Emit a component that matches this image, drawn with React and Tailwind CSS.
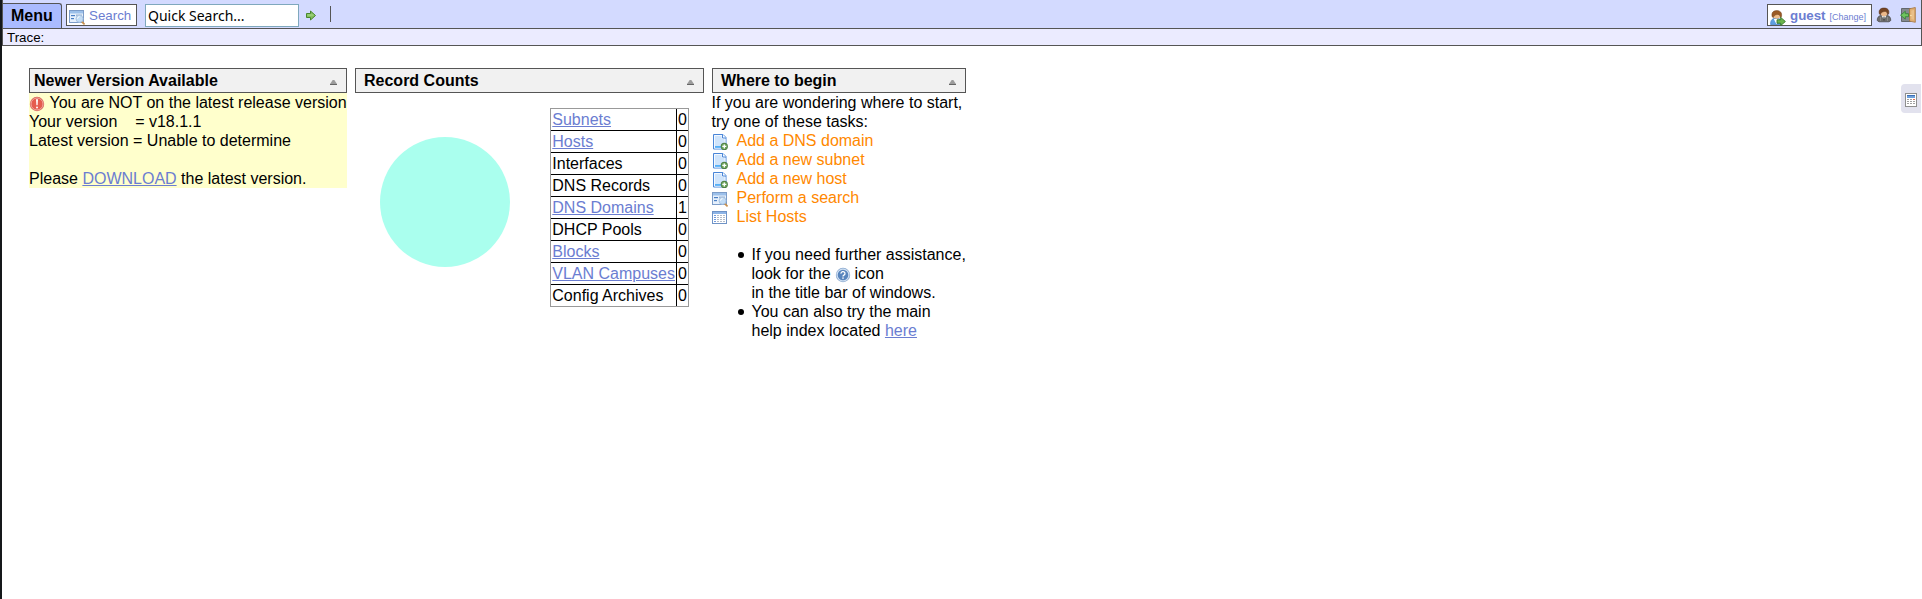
import React from "react";

const link = "text-[#6b7dd1] underline cursor-pointer";

function SearchIcon({ className = "" }) {
  return (
    <svg width="16" height="16" viewBox="0 0 16 16" className={className}>
      <rect x="0.5" y="1.5" width="14" height="12" fill="#e6f0fc" stroke="#7c9cc8" />
      <rect x="1" y="2" width="13" height="2.5" fill="#9cc0ea" />
      <rect x="2" y="6" width="4" height="1.2" fill="#4a7fc4" />
      <rect x="2" y="9" width="3" height="1.2" fill="#4a7fc4" />
      <rect x="7" y="5.5" width="6" height="1.5" fill="#9fb6d4" />
      <path d="M12.8 12.6 15 14.8" stroke="#c98f4c" strokeWidth="1.8" strokeLinecap="round" />
      <circle cx="10.5" cy="9.8" r="3.5" fill="#c3ddf6" stroke="#a9c4e2" />
      <path d="M8.5 9.600a2.100 2.100 0 0 1 2-2" stroke="#fff" fill="none" />
    </svg>
  );
}

function PageAddIcon() {
  return (
    <svg width="16" height="16" viewBox="0 0 16 16">
      <path d="M1.5.5h9.5l3 3v11.500h-12.500z" fill="#cfe4fb" stroke="#4a86d8" />
      <path d="M2.500 1.500h7.500v3h3v9.500h-10.500z" fill="none" stroke="#f4f9ff" />
      <path d="M10.500.5v3.500h3.500" fill="#fff" stroke="#4a86d8" />
      <rect x="3" y="12.200" width="6" height="1.500" fill="#39a3f5" />
      <circle cx="12.300" cy="12.400" r="3.600" fill="#4f7f45" />
      <circle cx="12.300" cy="12.400" r="2.700" fill="#6da45c" />
      <path d="M12.300 10.400v4M10.300 12.400h4" stroke="#fff" strokeWidth="1.300" />
    </svg>
  );
}

function ListIcon() {
  return (
    <svg width="16" height="16" viewBox="0 0 16 16" shapeRendering="crispEdges">
      <rect x="0.5" y="1.5" width="14" height="12" fill="#fff" stroke="#6f93c6" />
      <rect x="1" y="2" width="13" height="2" fill="#8db4e6" />
      <path d="M2 5.5h2M2 7.5h2M2 9.5h2M2 11.5h2" stroke="#6f9ade" />
      <path d="M5 5.5h2M8 5.5h2M11 5.5h2M5 7.5h2M8 7.5h2M11 7.5h2M5 9.5h2M8 9.5h2M11 9.5h2M5 11.5h2M8 11.5h2M11 11.5h2" stroke="#b4bcc8" />
    </svg>
  );
}

function ArrowIcon() {
  return (
    <svg width="12" height="11" viewBox="0 0 12 11">
      <path d="M1.5 3.5h4V1l5 4.5-5 4.5V7.5h-4z" fill="#84c05e" stroke="#47862f" strokeLinejoin="round" />
      <path d="M2.5 5h6" stroke="#a8d98a" />
    </svg>
  );
}

function AlertIcon() {
  return (
    <svg width="16" height="16" viewBox="0 0 16 16">
      <circle cx="8" cy="8" r="7.2" fill="#d9665c" />
      <circle cx="8" cy="8" r="6" fill="#e55c4e" stroke="#f3a79d" strokeWidth="1" />
      <path d="M7 3.2h2l-.4 6H7.4z" fill="#fff" />
      <rect x="7" y="10.4" width="2" height="2" rx="1" fill="#fff" />
    </svg>
  );
}

function HelpIcon() {
  return (
    <svg width="16" height="16" viewBox="0 0 16 16">
      <circle cx="8" cy="8" r="7.2" fill="#8ba9cf" />
      <circle cx="8" cy="8" r="5.9" fill="#5885bd" stroke="#cfe0f3" strokeWidth="1.2" />
      <path d="M6 6.600a2 1.900 0 1 1 3 1.500c-.7.4-1 .7-1 1.300" fill="none" stroke="#fff" strokeWidth="1.3" />
      <rect x="7.3" y="10.4" width="1.4" height="1.4" fill="#fff" />
    </svg>
  );
}

function UserGoIcon() {
  return (
    <svg width="16" height="16" viewBox="0 0 16 16">
      <path d="M.6 14.5C.5 10.5 2 8.500 5 8.500h3c2.500 0 3.600 2 3.600 6z" fill="#5e9fe0" stroke="#3f7fc6" strokeWidth=".7" />
      <path d="M3.800 9l2.700 5.300L9 9z" fill="#fff" />
      <circle cx="6.800" cy="5.600" r="3.200" fill="#f0bd8a" />
      <path d="M2.200 6.800C1 2.500 3.500.6 6.800.6s5.600 1.900 4.600 6.200L10.300 8C10.300 6 9.500 4.800 8 4.300c-2 .6-4 .3-4.600 3.500z" fill="#9b5a25" stroke="#6e3b14" strokeWidth=".5" />
      <path d="M7 9.800h3.700V7.400l4.700 4.100-4.700 4.100v-2.400H7z" fill="#6bb54d" stroke="#37782a" strokeWidth=".9" />
    </svg>
  );
}

function UserSuitIcon() {
  return (
    <svg width="16" height="16" viewBox="0 0 16 16">
      <path d="M1.200 13.500C1.200 10 3 8.500 5.500 8.500h5c2.500 0 4.300 1.500 4.300 5l-1.800 1.300H3z" fill="#6e6e6e" stroke="#444" strokeWidth=".7" />
      <path d="M4.500 10v4M11.500 10v4" stroke="#929292" strokeWidth=".8" />
      <path d="M5.800 8.700 8 13l2.200-4.300z" fill="#fff" />
      <path d="M7.500 9.500h1L8.700 13l-.7.8-.7-.8z" fill="#333" />
      <circle cx="8" cy="6" r="3.200" fill="#edb98a" />
      <path d="M3.400 7C2.200 2.800 4.700 1 8 1s5.800 1.800 4.600 6L11.500 8C11.500 5.500 10.500 4.500 9 4.300 7.500 4.900 4.800 4.500 4.500 8z" fill="#754424" stroke="#4e2a13" strokeWidth=".5" />
    </svg>
  );
}

function DoorIcon() {
  return (
    <svg width="16" height="16" viewBox="0 0 16 16">
      <path d="M1.500 1.500h9v13h-9z" fill="#848a8e" stroke="#63686c" />
      <path d="M9.500 1.800 15.300.5v14.800l-5.800-1.200z" fill="#dfae70" stroke="#a3743e" strokeWidth=".8" />
      <path d="M11.300 3.500 14 3v9.800l-2.700-.5z" fill="#eac08a" />
      <circle cx="10.900" cy="8.500" r=".7" fill="#fff2bd" />
      <path d="M8.500 6.700H5.300V4.300L.5 8.200l4.800 3.900V9.700h3.200z" fill="#6fc45f" stroke="#348136" strokeWidth=".8" />
    </svg>
  );
}

function CalculatorIcon() {
  return (
    <svg width="12" height="14" viewBox="0 0 12 14" shapeRendering="crispEdges">
      <rect x=".5" y=".5" width="11" height="13" fill="#fff" stroke="#8e8e8e" />
      <rect x="2" y="2" width="8" height="3" fill="#6d9fdc" />
      <rect x="2" y="2" width="8" height="1" fill="#3d6fb5" />
      <path d="M2 6.500h2M5 6.500h2M2 8.500h2M5 8.500h2M8 8.500h2M2 10.500h2M5 10.500h2M8 10.500h2" stroke="#a0a0a0" />
      <path d="M8 6.500h2" stroke="#e26a55" />
    </svg>
  );
}

function Panel({ title, width, inset, children }) {
  return (
    <section className={width}>
      <div className={"flex h-[25px] items-center justify-between border border-[#555] bg-[#f1f1f1] pr-[9px] " + inset}>
        <h2 className="text-base leading-[19px] font-bold">{title}</h2>
        <svg width="7" height="5" viewBox="0 0 7 5" className="mt-1">
          <path d="M2.700 0h1.600L7 4H0z" fill="#9c9c9c" />
          <path d="M0 4.500h7" stroke="#666" />
        </svg>
      </div>
      {children}
    </section>
  );
}

const counts = [
  ["Subnets", 0, true],
  ["Hosts", 0, true],
  ["Interfaces", 0, false],
  ["DNS Records", 0, false],
  ["DNS Domains", 1, true],
  ["DHCP Pools", 0, false],
  ["Blocks", 0, true],
  ["VLAN Campuses", 0, true],
  ["Config Archives", 0, false],
];

const tasks = [
  [PageAddIcon, "Add a DNS domain"],
  [PageAddIcon, "Add a new subnet"],
  [PageAddIcon, "Add a new host"],
  [SearchIcon, "Perform a search"],
  [ListIcon, "List Hosts"],
];

function Bullet({ children }) {
  return (
    <li className="flex">
      <span className="mt-[7px] mr-[7.5px] h-[6px] w-[6px] shrink-0 rounded-full bg-black" />
      <div>{children}</div>
    </li>
  );
}

export default function App() {
  return (
    <div className="relative h-[599px] w-[1922px] overflow-hidden border-l-2 border-[#15181a] bg-white font-['Liberation_Sans',Arial,sans-serif] text-base leading-[19px] text-black">
      <header className="border-x border-[#555]">
        <div className="flex h-[29px] items-start border-b border-[#555] bg-[#d3daff]">
          <div className="mt-[3px] flex h-[25px] w-[59px] items-center rounded-tr-[3px] border-t border-r border-[#555] bg-[#aabbff] pb-px pl-2 font-bold">
            Menu
          </div>
          <div className="mt-1 ml-1 flex h-[22px] w-[71px] items-start border border-[#555] bg-white pl-[2px] text-[13.333px] text-[#6b7dd1]">
            <SearchIcon className="mt-1 shrink-0" />
            <span className="mt-[3px] ml-1 leading-[15px]">Search</span>
          </div>
          <input
            className="mt-1 ml-2 h-[23px] w-[154px] border border-[#7fa8bd] bg-white px-[2px] font-['Noto_Sans',sans-serif] text-[14px]"
            defaultValue="Quick Search..."
          />
          <div className="mt-[10px] ml-[6px]"><ArrowIcon /></div>
          <div className="mt-[6px] ml-[13px] h-4 w-px bg-[#555]" />
          <div className="mt-1 ml-auto flex h-[22px] w-[105px] items-start border border-[#555] bg-white pl-[2px] text-[#6b7dd1]">
            <div className="mt-[5px]"><UserGoIcon /></div>
            <div className="mt-[3px] ml-1 flex items-baseline gap-[4px] whitespace-nowrap">
              <span className="text-[13.333px] leading-[15px] font-bold">guest</span>
              <span className="text-[9px] leading-[11px]">[Change]</span>
            </div>
          </div>
          <div className="mt-[7px] ml-1"><UserSuitIcon /></div>
          <div className="mt-[7px] mr-[5px] ml-2"><DoorIcon /></div>
        </div>
        <div className="h-[17px] border-b border-[#555] bg-[#ebebff] pl-1 text-[13.333px] leading-[17px]">Trace:</div>
      </header>

      <main className="flex items-start gap-2 pt-[22px] pl-[27px]">
        <Panel title="Newer Version Available" width="w-[318px]" inset="pl-1">
          <div className="bg-[#ffffcc] whitespace-nowrap">
            <div className="flex h-[19px]">
              <div className="mt-[3px] mr-[4.5px] w-4 shrink-0"><AlertIcon /></div>
              <span>You are NOT on the latest release version</span>
            </div>
            <p className="whitespace-pre">{"Your version\u00a0\u00a0\u00a0 = v18.1.1"}</p>
            <p>Latest version = Unable to determine</p>
            <p className="pt-[19px]">Please <a className={link}>DOWNLOAD</a> the latest version.</p>
          </div>
        </Panel>

        <Panel title="Record Counts" width="w-[349px]" inset="pl-2">
          <div className="flex items-start pt-[15px] pl-[25px]">
            <div className="mt-[29px] h-[130px] w-[130px] rounded-full bg-[#aaffee]" />
            <div className="ml-10 w-[139px] border border-[#999]">
              {counts.map(([name, value, linked]) => (
                <div key={name} className="flex h-[22px] border-b border-black last:h-[21px] last:border-b-0">
                  <div className="w-[126px] border-r border-black pl-[1.3px] leading-[21px] whitespace-nowrap">
                    {linked ? <a className={link}>{name}</a> : name}
                  </div>
                  <div className="pl-px leading-[21px]">{value}</div>
                </div>
              ))}
            </div>
          </div>
        </Panel>

        <Panel title="Where to begin" width="w-[254px]" inset="pl-2">
          <div className="whitespace-nowrap">
            <p className="-ml-[0.5px]">If you are wondering where to start,<br />try one of these tasks:</p>
            {tasks.map(([Icon, label]) => (
              <div key={label} className="flex h-[19px] text-[#ff8800]">
                <div className="mt-[3px] w-[24.5px]"><Icon /></div>
                <a className="cursor-pointer">{label}</a>
              </div>
            ))}
            <ul className="mt-[19px] pl-[26px]">
              <Bullet>
                If you need further assistance,<br />
                <span className="flex h-[19px]">look for the&nbsp;<span className="mt-[3px] -mr-px w-4"><HelpIcon /></span>&nbsp;icon</span>
                in the title bar of windows.
              </Bullet>
              <Bullet>
                You can also try the main<br />help index located <a className={link}>here</a>
              </Bullet>
            </ul>
          </div>
        </Panel>
      </main>

      <div className="absolute top-[84px] right-px flex h-[29px] w-5 rounded-l-[4px] bg-[#e2e2ee] pt-[9px] pl-1">
        <CalculatorIcon />
      </div>
    </div>
  );
}
